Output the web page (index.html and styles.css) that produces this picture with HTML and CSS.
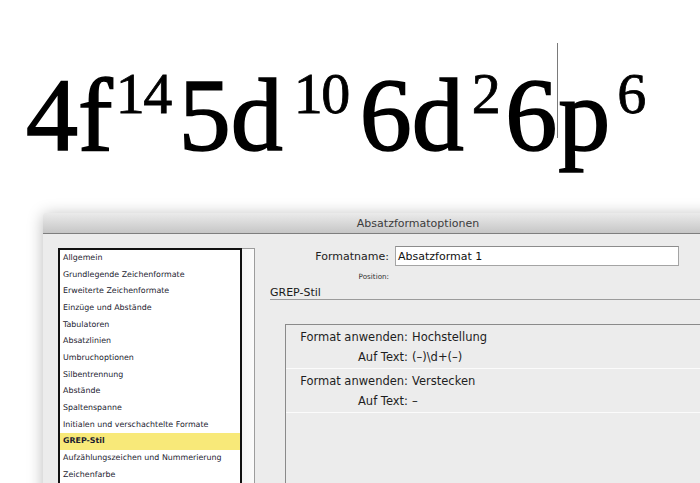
FILE: index.html
```html
<!DOCTYPE html>
<html lang="de">
<head>
<meta charset="utf-8">
<title>Absatzformatoptionen</title>
<link rel="stylesheet" href="styles.css">
</head>
<body>
<div class="formula">
  <span class="g4">4f</span><span class="sup s14">14</span><span class="g5">5d</span><span class="sup s10">10</span><span class="g6">6d</span><span class="sup s2">2</span><span class="g66">6</span><span class="caret"></span><span class="gp">p</span><span class="sup s6">6</span>
</div>
<div class="dialog">
  <div class="titlebar">Absatzformatoptionen</div>
  <div class="dbody">
    <div class="listframe">
      <ul class="list">
        <li>Allgemein</li>
        <li>Grundlegende Zeichenformate</li>
        <li>Erweiterte Zeichenformate</li>
        <li>Einzüge und Abstände</li>
        <li>Tabulatoren</li>
        <li>Absatzlinien</li>
        <li>Umbruchoptionen</li>
        <li>Silbentrennung</li>
        <li>Abstände</li>
        <li>Spaltenspanne</li>
        <li>Initialen und verschachtelte Formate</li>
        <li class="sel">GREP-Stil</li>
        <li>Aufzählungszeichen und Nummerierung</li>
        <li>Zeichenfarbe</li>
      </ul>
      <div class="track"></div>
    </div>
    <div class="pane">
      <div class="namerow">
        <span class="lbl">Formatname:</span>
        <span class="input">Absatzformat 1</span>
      </div>
      <div class="posrow">Position:</div>
      <div class="section">GREP-Stil</div>
      <div class="grepbox">
        <div class="rule">
          <span class="k">Format anwenden:</span><span class="v">Hochstellung</span>
          <span class="k">Auf Text:</span><span class="v">(–)\d+(–)</span>
        </div>
        <div class="rule">
          <span class="k">Format anwenden:</span><span class="v">Verstecken</span>
          <span class="k">Auf Text:</span><span class="v">–</span>
        </div>
      </div>
    </div>
  </div>
</div>
</body>
</html>
```
FILE: styles.css
```css
html, body {
  margin: 0;
  padding: 0;
}
body {
  width: 700px;
  height: 483px;
  overflow: hidden;
  background: #ffffff;
  position: relative;
}
.formula {
  height: 213px;
  box-sizing: border-box;
  padding-top: 63px;
  padding-left: 26px;
  font-family: "Liberation Serif", "Times New Roman", serif;
  font-size: 104px;
  line-height: 1;
  color: #000;
  -webkit-text-stroke: 1.6px #000;
  white-space: nowrap;
}
.sup {
  font-size: 58px;
  letter-spacing: -1.5px;
  line-height: 0;
  vertical-align: 37px;
  -webkit-text-stroke: 0.8px #000;
}
.s14 { margin-left: 3px; }
.g5 { margin-left: 8px; }
.s10 { margin-left: 11px; }
.g6 { margin-left: 11px; }
.s2 { margin-left: 8px; }
.g66 { margin-left: 6px; }
.s6 { margin-left: 7px; }
.caret {
  display: inline-block;
  width: 1px;
  height: 95px;
  margin-top: -40px;
  background: #7a7a7a;
  vertical-align: 12px;
  -webkit-text-stroke: 0;
}
.dialog {
  margin-left: 43px;
  width: 760px;
  height: 300px;
  background: #ececec;
  border-radius: 4px 4px 0 0;
  box-shadow: 0 2px 16px rgba(0, 0, 0, 0.28);
}
.titlebar {
  height: 20px;
  border-radius: 4px 4px 0 0;
  background: linear-gradient(#ebebeb, #c6c6c6);
  border-bottom: 1px solid #7e7e7e;
  text-align: center;
  font-family: "DejaVu Sans", sans-serif;
  font-size: 11px;
  line-height: 21px;
  color: #3c3c3c;
  padding-right: 10px;
}
.dbody {
  display: flex;
  padding-left: 15px;
}
.listframe {
  display: flex;
  margin-top: 14px;
  height: 260px;
}
.list {
  list-style: none;
  margin: 0;
  padding: 0;
  width: 180px;
  border: 2px solid #111;
  border-bottom: none;
  background: #ffffff;
  font-family: "DejaVu Sans", sans-serif;
  font-size: 7.9px;
  color: #1c1c30;
}
.list li {
  height: 16.67px;
  line-height: 16.67px;
  padding-left: 3px;
  white-space: nowrap;
}
.list li.sel {
  background: #f8e979;
  font-weight: bold;
}
.track {
  width: 12px;
  border: 1px solid #9c9c9c;
  border-left: none;
  border-bottom: none;
  background: linear-gradient(90deg, #f4f4f4, #fbfbfb);
}
.pane {
  flex: 1;
  margin-left: 15px;
  padding-top: 12px;
  font-family: "DejaVu Sans", sans-serif;
  color: #222;
}
.namerow {
  display: flex;
  align-items: center;
  height: 20px;
}
.lbl {
  width: 119px;
  text-align: right;
  font-size: 11px;
}
.input {
  margin-left: 6px;
  width: 280px;
  height: 18px;
  border: 1px solid #a4a4a4;
  border-top-color: #8c8c8c;
  background: #fff;
  font-size: 11px;
  line-height: 19px;
  padding-left: 2px;
  color: #111;
}
.posrow {
  width: 119px;
  height: 9px;
  padding-top: 6px;
  text-align: right;
  font-size: 7.2px;
  line-height: 9px;
  color: #333;
}
.section {
  margin-top: 6px;
  height: 12px;
  font-size: 11px;
  line-height: 12px;
  border-bottom: 1px solid #9b9b9b;
  color: #1a1a1a;
}
.grepbox {
  margin-top: 24px;
  margin-left: 15px;
  height: 200px;
  border: 1px solid #8a8a8a;
  border-right: none;
  background: #ececec;
}
.rule {
  display: grid;
  grid-template-columns: 122px 1fr;
  column-gap: 4px;
  padding: 2px 0 1px;
  border-bottom: 1px solid #fbfbfb;
  font-size: 11.5px;
  line-height: 20px;
  color: #1e1e1e;
}
.k {
  text-align: right;
}
```
